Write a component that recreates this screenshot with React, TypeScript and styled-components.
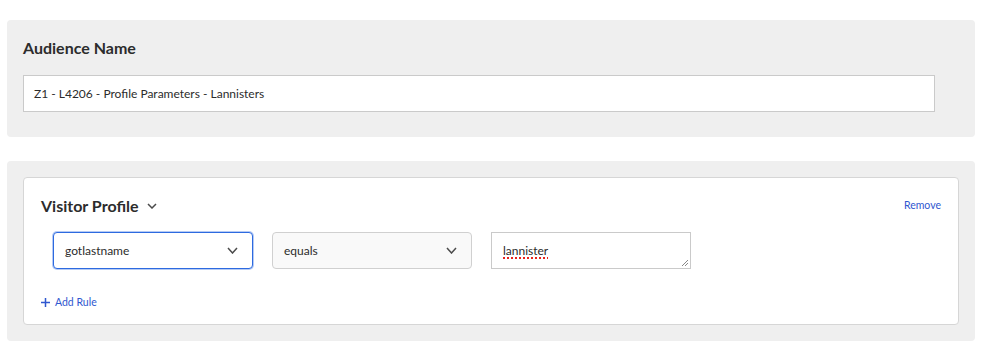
import React from 'react'
import styled, { createGlobalStyle } from 'styled-components'

const GlobalStyle = createGlobalStyle`
  body {
    margin: 0;
    background: #ffffff;
    font-family: Lato, 'Liberation Sans', sans-serif;
    color: #2c2c2c;
  }
`

const Page = styled.div`
  padding: 20px 15px 5px 7px;
  display: flex;
  flex-direction: column;
  gap: 24px;
`

const Panel = styled.section<{ $pad: string }>`
  background: #efefef;
  border-radius: 4px;
  padding: ${(p) => p.$pad};
`

const Title = styled.h2`
  margin: 0;
  font-size: 16px;
  line-height: 20px;
  font-weight: 700;
  color: #2c2c2c;
`

const NameInput = styled.div`
  margin-top: 17px;
  width: calc(100% - 24px);
  height: 37px;
  box-sizing: border-box;
  background: #fff;
  border: 1px solid #cacaca;
  display: flex;
  align-items: center;
  padding: 0 10px;
  font-size: 12px;
  color: #2c2c2c;
`

const Card = styled.div`
  background: #fff;
  border: 1px solid #d6d6d6;
  border-radius: 4px;
  padding: 18px 17px 16px 17px;
`

const CardHeader = styled.div`
  display: flex;
  align-items: center;
  justify-content: space-between;
`

const HeaderLeft = styled.div`
  display: flex;
  align-items: center;
  gap: 8px;
`

const LinkText = styled.span<{ $lift?: boolean }>`
  font-size: 10.5px;
  color: #2f57cf;
  cursor: pointer;
  margin-bottom: ${(p) => (p.$lift ? '3px' : '0')};
`

const Rules = styled.div`
  margin: 16px 0 0 12px;
  display: flex;
  gap: 19px;
`

const Picker = styled.div<{ $focused?: boolean }>`
  width: 200px;
  height: 37px;
  box-sizing: border-box;
  border-radius: 4px;
  display: flex;
  align-items: center;
  justify-content: space-between;
  padding: 0 14px 0 11px;
  font-size: 12px;
  color: #2c2c2c;
  background: ${(p) => (p.$focused ? '#ffffff' : '#f9f9f9')};
  border: 1px solid ${(p) => (p.$focused ? '#2d6ae0' : '#d0d0d0')};
  box-shadow: ${(p) => (p.$focused ? '0 0 0 1px rgba(45,106,224,0.35)' : 'none')};
`

const TextBox = styled.div`
  position: relative;
  width: 200px;
  height: 37px;
  box-sizing: border-box;
  border: 1px solid #cacaca;
  background: #fff;
  display: flex;
  align-items: center;
  padding: 0 11px;
  font-size: 12px;
`

const Misspelled = styled.span`
  text-decoration: underline dotted #e8231c;
  text-decoration-thickness: 2px;
  text-underline-offset: 2px;
`

const Grip = styled.svg`
  position: absolute;
  right: 2px;
  bottom: 2px;
`

const AddRule = styled.div`
  margin-top: 27px;
  display: flex;
  align-items: center;
  gap: 5px;
`

const Chevron = ({ w = 9, h = 5 }: { w?: number; h?: number }) => (
  <svg width={w + 2} height={h + 2} viewBox={`-1 -1 ${w + 2} ${h + 2}`}>
    <path d={`M0 0 L${w / 2} ${h} L${w} 0`} fill="none" stroke="#4b4b4b" strokeWidth="1.5" />
  </svg>
)

const App = () => {
  return (
    <>
      <GlobalStyle />
      <Page>
        <Panel $pad="18px 16px 25px 16px">
          <Title>Audience Name</Title>
          <NameInput>Z1 - L4206 - Profile Parameters - Lannisters</NameInput>
        </Panel>
        <Panel $pad="16px">
          <Card>
            <CardHeader>
              <HeaderLeft>
                <Title>Visitor Profile</Title>
                <Chevron w={8} h={4} />
              </HeaderLeft>
              <LinkText $lift>Remove</LinkText>
            </CardHeader>
            <Rules>
              <Picker $focused>
                gotlastname
                <Chevron />
              </Picker>
              <Picker>
                equals
                <Chevron />
              </Picker>
              <TextBox>
                <Misspelled>lannister</Misspelled>
                <Grip width="7" height="7" viewBox="0 0 7 7">
                  <path d="M1 7 L7 1 M4 7 L7 4" stroke="#888" strokeWidth="1" />
                </Grip>
              </TextBox>
            </Rules>
            <AddRule>
              <svg width="9" height="9" viewBox="0 0 9 9">
                <path d="M4.5 0 V9 M0 4.5 H9" stroke="#2f57cf" strokeWidth="1.5" />
              </svg>
              <LinkText>Add Rule</LinkText>
            </AddRule>
          </Card>
        </Panel>
      </Page>
    </>
  )
}

export default App
